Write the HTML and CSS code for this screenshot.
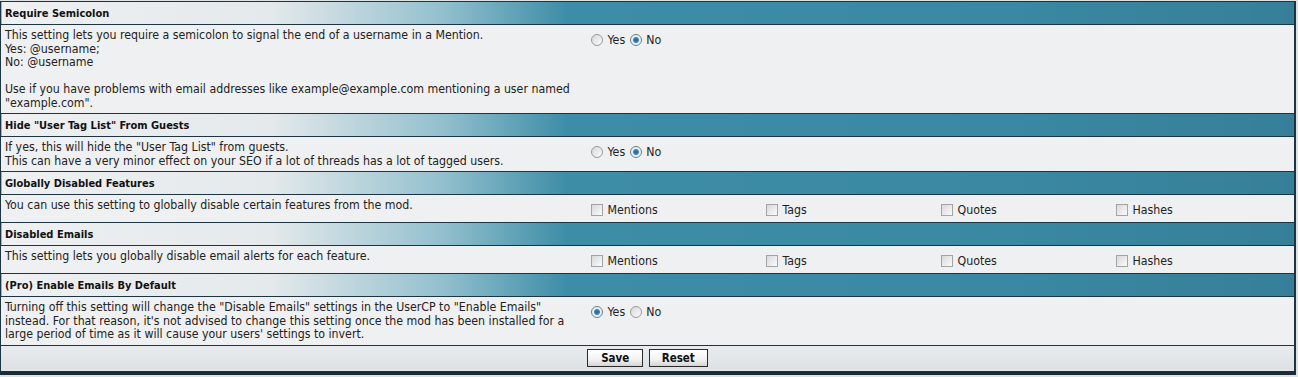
FILE: index.html
```html
<!DOCTYPE html>
<html lang="en">
<head>
    <meta charset="UTF-8">
    <title>Mention Settings</title>
    <link rel="stylesheet" href="styles.css">
</head>
<body>
    <form class="settings">
        <table class="tborder">
            <tr><td class="thead" colspan="2">Require Semicolon</td></tr>
            <tr>
                <td class="desc">This setting lets you require a semicolon to signal the end of a username in a Mention.<br>Yes: @username;<br>No: @username<br><br>Use if you have problems with email addresses like example@example.com mentioning a user named<br>"example.com".</td>
                <td class="ctrl">
                    <label class="opt"><input type="radio" name="semicolon"> Yes</label>
                    <label class="opt"><input type="radio" name="semicolon" checked> No</label>
                </td>
            </tr>

            <tr><td class="thead" colspan="2">Hide "User Tag List" From Guests</td></tr>
            <tr>
                <td class="desc">If yes, this will hide the "User Tag List" from guests.<br>This can have a very minor effect on your SEO if a lot of threads has a lot of tagged users.</td>
                <td class="ctrl">
                    <label class="opt"><input type="radio" name="taglist"> Yes</label>
                    <label class="opt"><input type="radio" name="taglist" checked> No</label>
                </td>
            </tr>

            <tr><td class="thead" colspan="2">Globally Disabled Features</td></tr>
            <tr>
                <td class="desc">You can use this setting to globally disable certain features from the mod.</td>
                <td class="ctrl">
                    <div class="checks">
                        <label><input type="checkbox"> Mentions</label>
                        <label><input type="checkbox"> Tags</label>
                        <label><input type="checkbox"> Quotes</label>
                        <label><input type="checkbox"> Hashes</label>
                    </div>
                </td>
            </tr>

            <tr><td class="thead" colspan="2">Disabled Emails</td></tr>
            <tr>
                <td class="desc">This setting lets you globally disable email alerts for each feature.</td>
                <td class="ctrl">
                    <div class="checks">
                        <label><input type="checkbox"> Mentions</label>
                        <label><input type="checkbox"> Tags</label>
                        <label><input type="checkbox"> Quotes</label>
                        <label><input type="checkbox"> Hashes</label>
                    </div>
                </td>
            </tr>

            <tr><td class="thead" colspan="2">(Pro) Enable Emails By Default</td></tr>
            <tr>
                <td class="desc">Turning off this setting will change the "Disable Emails" settings in the UserCP to "Enable Emails"<br>instead. For that reason, it's not advised to change this setting once the mod has been installed for a<br>large period of time as it will cause your users' settings to invert.</td>
                <td class="ctrl">
                    <label class="opt"><input type="radio" name="default" checked> Yes</label>
                    <label class="opt"><input type="radio" name="default"> No</label>
                </td>
            </tr>

            <tr>
                <td class="tfoot" colspan="2">
                    <button type="button" class="button">Save</button>
                    <button type="reset" class="button">Reset</button>
                </td>
            </tr>
        </table>
    </form>
</body>
</html>
```

FILE: styles.css
```css
body {
    margin: 0;
    padding-top: 1px;
    background: #dde2e5;
    font-family: "DejaVu Sans Condensed", "DejaVu Sans", Verdana, sans-serif;
    font-stretch: condensed;
    font-size: 12.25px;
    color: #222;
}

.settings {
    margin: 0;
}

.tborder {
    width: 1296px;
    border-collapse: collapse;
    border-left: 1px solid #1d3442;
    border-right: 2px solid #1d3442;
    border-bottom: 4px solid #1b2c36;
    background: #eff0f1;
}

td {
    padding: 0;
    vertical-align: top;
}

.thead {
    height: 22px;
    padding: 0 4px;
    vertical-align: middle;
    font-size: 11px;
    font-weight: bold;
    color: #111;
    border-top: 1px solid #1d3442;
    border-bottom: 1px solid #1d3442;
    background: linear-gradient(to right, #eef0f1 0, #e4e9eb 270px, #93c0ce 440px, #3e8da7 565px, #3a88a2 1000px, #377f98 100%);
}

.desc {
    width: 582px;
    padding: 4px 4px 3px 4px;
    line-height: 13.5px;
}

.ctrl {
    padding: 9px 3px 5px 3px;
    line-height: 13px;
}

.opt {
    margin-right: 1px;
}

.checks {
    display: grid;
    grid-template-columns: repeat(4, 175px);
}

input {
    -webkit-appearance: none;
    appearance: none;
    margin: 0 1px 0 0;
    width: 12px;
    height: 12px;
    vertical-align: -2px;
    border: 1px solid #9a9a9a;
    background: linear-gradient(135deg, #d8d8d8, #fbfbfb);
}

input[type="radio"] {
    border-radius: 50%;
}

input[type="radio"]:checked {
    border-color: #6b7d8a;
    background: radial-gradient(circle, #1f5f8e 0, #3f86b8 2.5px, #e8eef2 3.5px, #f6f8f9 100%);
}

input[type="checkbox"] {
    width: 12px;
    height: 12px;
    border-color: #a4a4a4;
}

.tfoot {
    height: 25px;
    text-align: center;
    vertical-align: middle;
    border-top: 1px solid #1d3442;
    background: linear-gradient(#e9ecee, #dde1e4);
}

.button {
    width: 56px;
    height: 18px;
    padding: 0;
    margin: 0 1px;
    font-family: inherit;
    font-stretch: condensed;
    font-size: 11.5px;
    font-weight: bold;
    color: #111;
    border: 1px solid #2b2b2b;
    background: linear-gradient(#ffffff, #f2f2f2 60%, #d4d4d4);
    cursor: pointer;
}

.button + .button {
    width: 59px;
}
```
